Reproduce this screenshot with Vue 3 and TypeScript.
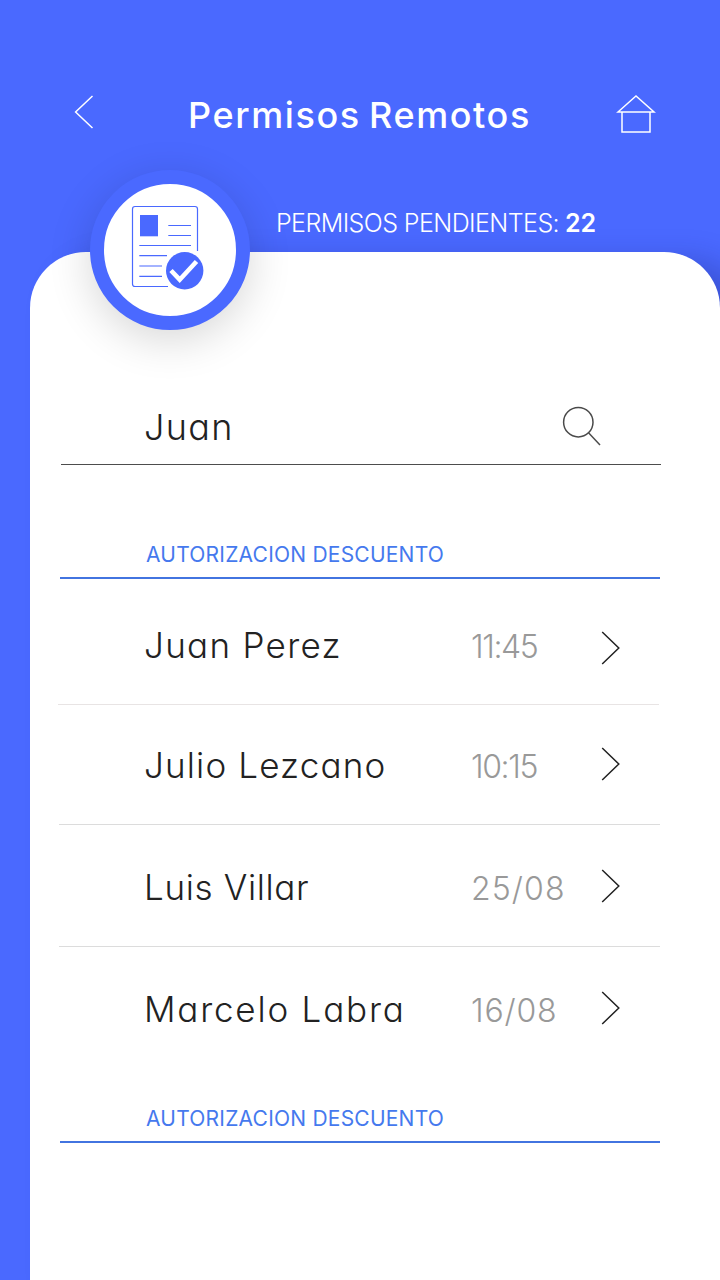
<script setup lang="ts">
interface Permit {
  id: string
  name: string
  when: string
}

const query = 'Juan'
const pending = 22
const sectionTitle = 'AUTORIZACION DESCUENTO'

const permits: Permit[] = [
  { id: 'perez', name: 'Juan Perez', when: '11:45' },
  { id: 'lezcano', name: 'Julio Lezcano', when: '10:15' },
  { id: 'villar', name: 'Luis Villar', when: '25/08' },
  { id: 'labra', name: 'Marcelo Labra', when: '16/08' },
]
</script>

<template>
  <div class="screen">
    <header class="topbar">
      <svg class="back" viewBox="0 0 22 36" width="22" height="36">
        <path d="M19.5 2 L2.6 18 L19.5 34" />
      </svg>
      <h1 class="title">Permisos Remotos</h1>
      <svg class="home" viewBox="0 0 40 40" width="40" height="40">
        <path d="M2 18 L20 2 L38 18 Z" />
        <path d="M6 18 V38 H34 V18" />
      </svg>
    </header>

    <p class="pending"><span class="pending-label">PERMISOS PENDIENTES:</span><b class="pending-count">{{ pending }}</b></p>

    <main class="card">
      <div class="badge">
        <svg viewBox="0 0 132 132" width="132" height="132">
          <g class="doc">
            <path d="M93.5 67 V25 Q93.5 22.5 91 22.5 H31 Q28.5 22.5 28.5 25 V100 Q28.5 102.5 31 102.5 H64" />
            <path d="M64.3 41.5 H87 M64.3 51.5 H87 M35.3 61.5 H87 M35.3 71.7 H63 M35.3 82 H58 M35.3 92.4 H58" />
          </g>
          <rect class="solid" x="36" y="31" width="18" height="21.3" />
          <circle class="solid" cx="80.7" cy="86.7" r="18.7" />
          <path class="tick" d="M67 86.5 L75.7 95.7 L92.5 77.5" />
        </svg>
      </div>

      <div class="search">
        <span class="query">{{ query }}</span>
        <svg class="lens" viewBox="0 0 42 42" width="42" height="42">
          <circle cx="18.3" cy="17.2" r="14.7" />
          <path d="M28.5 27.8 L40 40" />
        </svg>
      </div>

      <h2 class="section">{{ sectionTitle }}</h2>
      <ul class="list">
        <li v-for="p in permits" :key="p.id" class="row" :class="p.id">
          <span class="name">{{ p.name }}</span>
          <span class="when">{{ p.when }}</span>
          <svg class="chevron" viewBox="0 0 20 34" width="20" height="34">
            <path d="M1.2 1 L17.8 17 L1.2 33" />
          </svg>
        </li>
      </ul>
      <h2 class="section last">{{ sectionTitle }}</h2>
    </main>
  </div>
</template>

<style>
body {
  margin: 0;
  background: #4a69ff;
}
</style>

<style scoped>
.screen {
  box-sizing: border-box;
  width: 720px;
  height: 1280px;
  overflow: hidden;
  background: #4a69ff;
  font-family: Inter, "Open Sans", sans-serif;
  font-feature-settings: "cv11" 1;
  color: #222;
  display: flex;
  flex-direction: column;
}
svg {
  display: block;
  fill: none;
}
h1, h2, p, ul {
  margin: 0;
  padding: 0;
  font-weight: 400;
}
.topbar {
  display: flex;
  align-items: flex-start;
  height: 108px;
  padding: 94px 64px 0 73px;
}
.back, .home {
  stroke: #fff;
  stroke-width: 1.5;
  flex: none;
}
.title {
  flex: 1;
  padding-left: 93px;
  font-size: 36px;
  line-height: 43px;
  font-weight: 500;
  letter-spacing: 1.6px;
  word-spacing: -3px;
  white-space: nowrap;
  color: #fff;
}
.pending {
  position: relative;
  z-index: 1;
  display: flex;
  height: 50px;
  padding-left: 276px;
  font-size: 25px;
  line-height: 42px;
  font-weight: 300;
  color: #fff;
  white-space: nowrap;
}
.pending-label {
  width: 289px;
  letter-spacing: -0.58px;
}
.pending-count {
  font-weight: 600;
}
.card {
  position: relative;
  width: 690px;
  flex: 1;
  margin-left: 30px;
  background: #fff;
  border-radius: 56px 56px 0 0;
  box-shadow: 26px 8px 30px rgba(20, 30, 110, 0.28);
  display: flex;
  flex-direction: column;
}
.badge {
  position: absolute;
  left: 60px;
  top: -82px;
  width: 132px;
  height: 132px;
  border: 14px solid #4a69ff;
  border-radius: 50%;
  background: #fff;
  box-shadow: 0 10px 44px rgba(0, 0, 0, 0.16);
}
.doc {
  stroke: #4a69ff;
  stroke-width: 1.2;
}
.solid {
  fill: #4a69ff;
}
.tick {
  stroke: #fff;
  stroke-width: 4.6;
}
.search {
  display: flex;
  justify-content: space-between;
  align-items: flex-start;
  box-sizing: border-box;
  width: 600px;
  height: 61px;
  margin: 152px 0 0 31px;
  padding: 0 59px 0 83px;
  border-bottom: 1px solid #4d4d4d;
}
.query {
  font-size: 36px;
  line-height: 47px;
  font-weight: 300;
  letter-spacing: 1.3px;
}
.lens {
  margin-top: 1px;
  stroke: #4a4a4a;
  stroke-width: 1.5;
}
.section {
  box-sizing: border-box;
  width: 600px;
  height: 44px;
  margin: 70px 0 0 30px;
  padding-left: 86px;
  border-bottom: 2px solid #4274e0;
  font-size: 21px;
  line-height: 40px;
  font-weight: 400;
  letter-spacing: 0.22px;
  color: #4579ee;
}
.section.last {
  margin-top: 0;
}
.list {
  list-style: none;
}
.row {
  display: grid;
  grid-template-columns: 328px 129px 20px;
  align-items: start;
  box-sizing: border-box;
  width: 601px;
  height: 122px;
  margin-left: 29px;
  padding: 44px 0 0 85px;
  border-bottom: 1px solid #dcdcdc;
}
.row.perez {
  height: 126px;
  margin-left: 28px;
  padding: 48px 0 0 86px;
  border-color: #e8e4e4;
}
.row.lezcano {
  height: 120px;
  padding-top: 42px;
}
.row.labra {
  height: 152px;
  border-bottom: 0;
}
.name {
  font-size: 35px;
  line-height: 36px;
  font-weight: 300;
  letter-spacing: 1.3px;
  white-space: nowrap;
}
.lezcano .name {
  letter-spacing: 1.15px;
}
.villar .name {
  letter-spacing: 0.65px;
}
.labra .name {
  letter-spacing: 1.8px;
}
.when {
  margin-left: -1px;
  font-size: 32px;
  line-height: 40px;
  font-weight: 300;
  color: #999;
  white-space: nowrap;
}
.perez .when, .lezcano .when {
  letter-spacing: -1.4px;
}
.villar .when {
  letter-spacing: 1.1px;
}
.labra .when {
  letter-spacing: 0.8px;
}
.chevron {
  stroke: #222;
  stroke-width: 1.5;
}
.perez .chevron {
  margin-top: 4px;
}
</style>
